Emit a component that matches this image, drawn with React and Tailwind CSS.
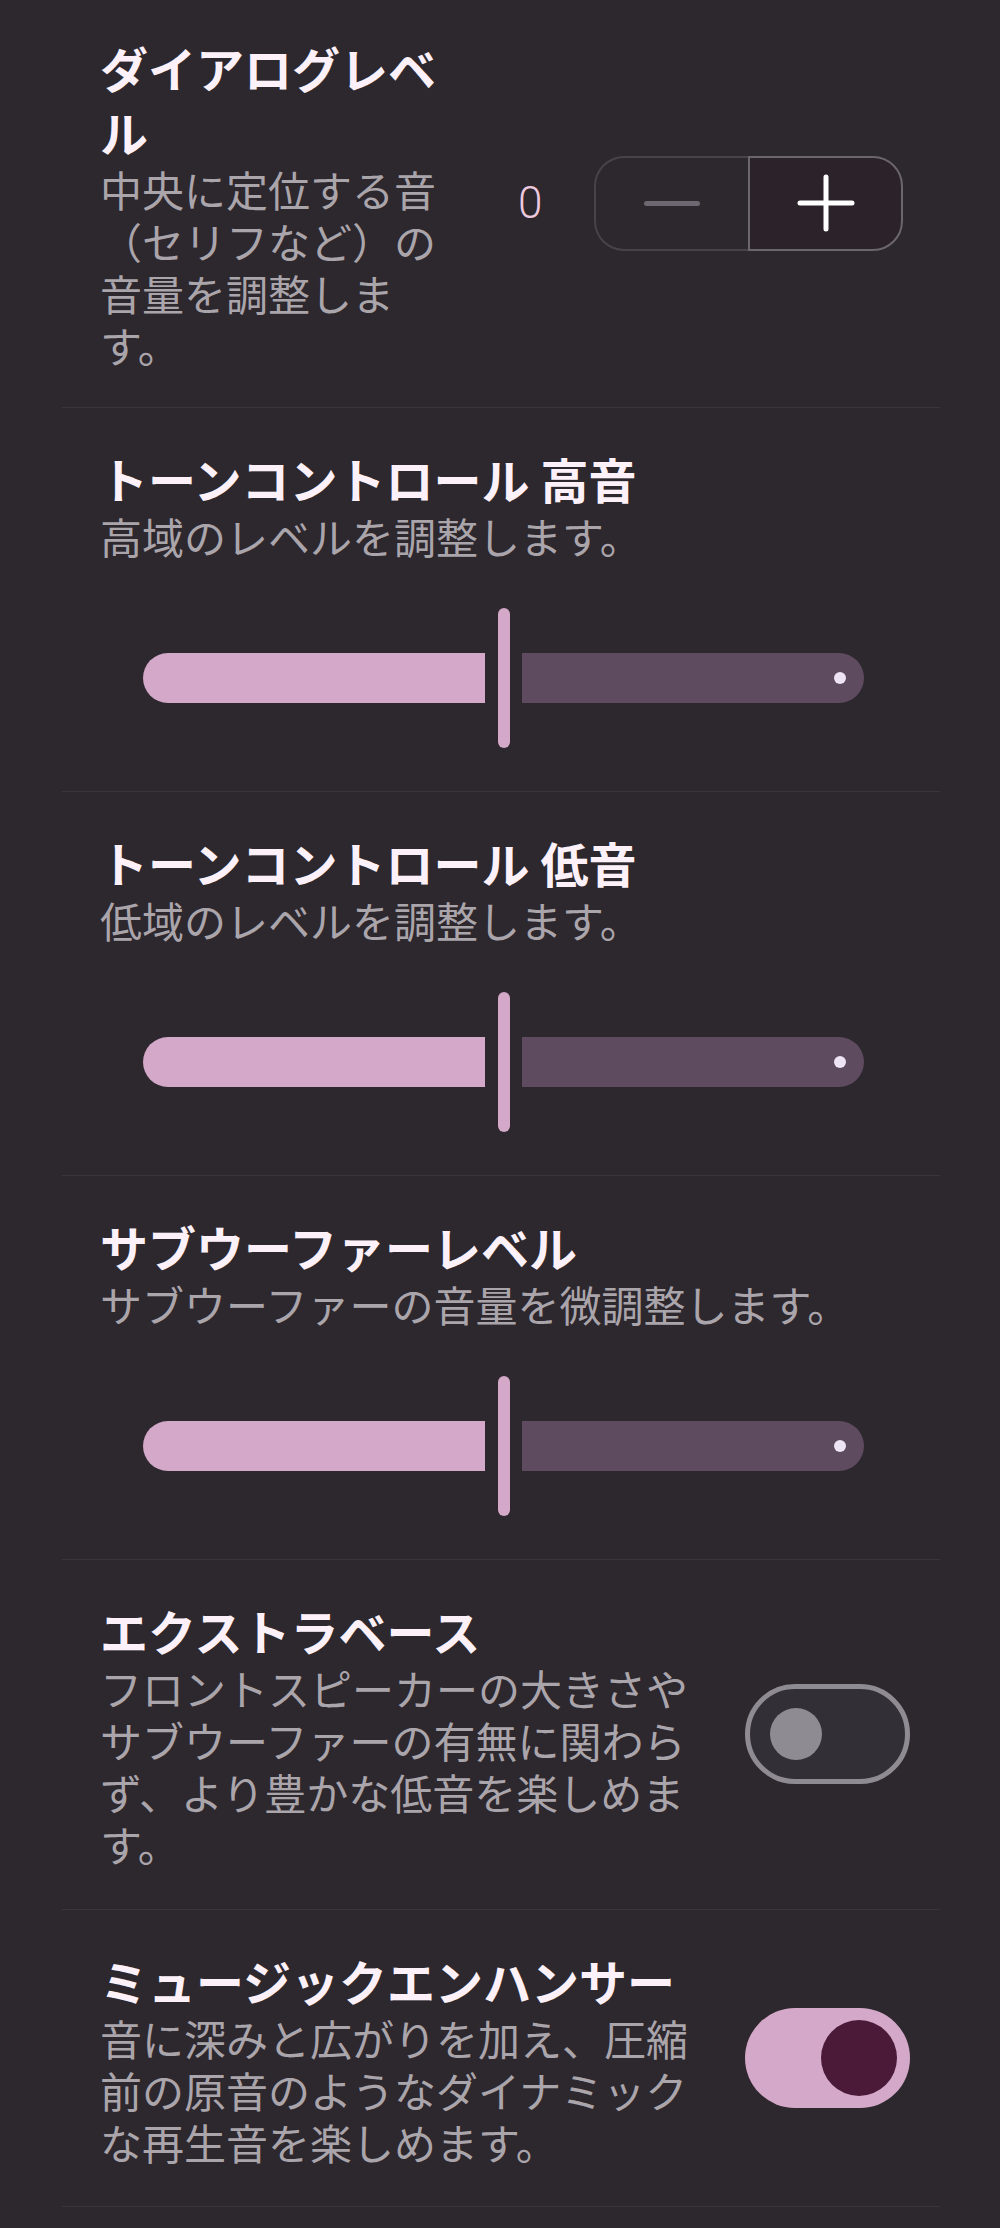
const sliders = [
  { title: "トーンコントロール 高音", desc: "高域のレベルを調整します。" },
  { title: "トーンコントロール 低音", desc: "低域のレベルを調整します。" },
  { title: "サブウーファーレベル", desc: "サブウーファーの音量を微調整します。" },
];

const toggles = [
  {
    title: "エクストラベース",
    desc: "フロントスピーカーの大きさやサブウーファーの有無に関わらず、より豊かな低音を楽しめます。",
    on: false,
    pb: "pb-[39px]",
  },
  {
    title: "ミュージックエンハンサー",
    desc: "音に深みと広がりを加え、圧縮前の原音のようなダイナミックな再生音を楽しめます。",
    on: true,
    pb: "pb-[38px]",
  },
];

function Slider() {
  return (
    <div className="ml-[43px] mt-[46px] mb-[4px] flex h-[140px] items-center">
      <div className="h-[50px] w-[342px] shrink-0 rounded-l-full rounded-r-[5px] bg-[#d4a8c8]" />
      <div className="ml-[13px] h-[140px] w-[12px] shrink-0 rounded-full bg-[#d4a8c8]" />
      <div className="ml-[12px] flex h-[50px] w-[342px] shrink-0 items-center justify-end rounded-l-[5px] rounded-r-full bg-[#5f4b60] pr-[18px]">
        <div className="h-[12px] w-[12px] rounded-full bg-[#efe3f6]" />
      </div>
    </div>
  );
}

function Switch({ on }) {
  if (on) {
    return (
      <div className="flex h-[100px] w-[165px] shrink-0 items-center justify-end rounded-full bg-[#d4a8c8] pr-[13px]">
        <div className="h-[76px] w-[76px] rounded-full bg-[#4a1a38]" />
      </div>
    );
  }
  return (
    <div className="flex h-[100px] w-[165px] shrink-0 items-center rounded-full border-[5px] border-[#8f8b93] bg-[#323036] pl-[20px]">
      <div className="h-[52px] w-[52px] rounded-full bg-[#8f8b93]" />
    </div>
  );
}

export default function App() {
  return (
    <div className="min-h-[2228px] w-full bg-[#2d272e] font-['Noto_Sans_CJK_JP','Noto_Sans',sans-serif]">
      <div className="ml-[62px] w-[878px]">
        {/* dialog level */}
        <div className="flex items-center border-b border-[#3b343c] pl-[38px] pr-[30px] pt-[35px] pb-[36px]">
          <div className="w-[360px]">
            <h2 className="text-[48px] font-bold leading-[64px] text-[#fcf1f9]">ダイアログレベル</h2>
            <p className="text-[42px] leading-[52px] text-[#aaa5ab]">中央に定位する音（セリフなど）の音量を調整します。</p>
          </div>
          <span className="ml-[58px] w-[26px] font-['Roboto',sans-serif] text-[44px] font-light leading-none text-[#ecc9df]">0</span>
          <div className="ml-[50px] flex h-[95px]">
            <button className="flex w-[154px] items-center justify-center rounded-l-[30px] border-2 border-r-0 border-[#48424a]">
              <span className="h-[5px] w-[56px] rounded-full bg-[#6c6770]" />
            </button>
            <button className="flex w-[155px] items-center justify-center rounded-r-[30px] border-2 border-[#6b656d] bg-[#2b2329]">
              <svg width="58" height="58" viewBox="0 0 58 58">
                <path d="M29 3v52M3 29h52" stroke="#ffffff" strokeWidth="5" strokeLinecap="round" />
              </svg>
            </button>
          </div>
        </div>

        {sliders.map((s) => (
          <div key={s.title} className="border-b border-[#3b343c] pl-[38px] pr-[30px] pt-[38px] pb-[39px]">
            <h2 className="text-[48px] font-bold leading-[64px] text-[#fcf1f9]">{s.title}</h2>
            <p className="text-[42px] leading-[52px] text-[#aaa5ab]">{s.desc}</p>
            <Slider />
          </div>
        ))}

        {toggles.map((t) => (
          <div key={t.title} className={`flex items-center gap-[40px] border-b border-[#3b343c] pl-[38px] pr-[30px] pt-[38px] ${t.pb}`}>
            <div className="flex-1">
              <h2 className="text-[48px] font-bold leading-[64px] text-[#fcf1f9]">{t.title}</h2>
              <p className="text-[42px] leading-[52px] text-[#aaa5ab]">{t.desc}</p>
            </div>
            <Switch on={t.on} />
          </div>
        ))}
      </div>
    </div>
  );
}
